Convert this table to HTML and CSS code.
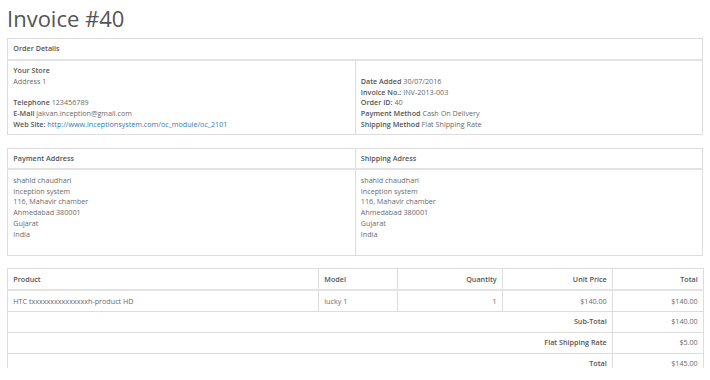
FILE: index.html
```html
<!DOCTYPE html>
<html>
<head>
<meta charset="utf-8">
<link rel="stylesheet" href="styles.css">
</head>
<body>
<div class="container">
  <h1 class="title">Invoice #40</h1>

  <table class="tbl">
    <thead>
      <tr><td colspan="2">Order Details</td></tr>
    </thead>
    <tbody>
      <tr>
        <td class="half">
          <b>Your Store</b><br>
          Address 1<br>
          <br>
          <b>Telephone</b> 123456789<br>
          <b>E-Mail</b> jakvan.inception@gmail.com<br>
          <b>Web Site:</b> <a href="#">http://www.inceptionsystem.com/oc_module/oc_2101</a>
        </td>
        <td class="half">
          <span class="blank">&nbsp;</span><br>
          <b>Date Added</b> 30/07/2016<br>
          <b>Invoice No.:</b> INV-2013-003<br>
          <b>Order ID:</b> 40<br>
          <b>Payment Method</b> Cash On Delivery<br>
          <b>Shipping Method</b> Flat Shipping Rate
        </td>
      </tr>
    </tbody>
  </table>

  <table class="tbl">
    <thead>
      <tr><td class="half">Payment Address</td><td class="half">Shipping Adress</td></tr>
    </thead>
    <tbody>
      <tr>
        <td>shahid chaudhari<br>Inception system<br>116, Mahavir chamber<br>Ahmedabad 380001<br>Gujarat<br>India<br>&nbsp;</td>
        <td>shahid chaudhari<br>Inception system<br>116, Mahavir chamber<br>Ahmedabad 380001<br>Gujarat<br>India<br>&nbsp;</td>
      </tr>
    </tbody>
  </table>

  <table class="tbl products">
    <colgroup>
      <col class="c-product"><col class="c-model"><col class="c-qty"><col class="c-price"><col class="c-total">
    </colgroup>
    <thead>
      <tr>
        <td>Product</td>
        <td>Model</td>
        <td class="r">Quantity</td>
        <td class="r">Unit Price</td>
        <td class="r">Total</td>
      </tr>
    </thead>
    <tbody>
      <tr>
        <td>HTC txxxxxxxxxxxxxxxh-product HD</td>
        <td>lucky 1</td>
        <td class="r">1</td>
        <td class="r">$140.00</td>
        <td class="r">$140.00</td>
      </tr>
    </tbody>
    <tfoot>
      <tr><td class="r lbl" colspan="4">Sub-Total</td><td class="r">$140.00</td></tr>
      <tr><td class="r lbl" colspan="4">Flat Shipping Rate</td><td class="r">$5.00</td></tr>
      <tr><td class="r lbl" colspan="4">Total</td><td class="r">$145.00</td></tr>
    </tfoot>
  </table>
</div>
</body>
</html>
```

FILE: styles.css
```css
html, body {
  margin: 0;
  padding: 0;
  background: #fff;
}

body {
  font-family: "Open Sans", "Liberation Sans", sans-serif;
  font-size: 7.2px;
  line-height: 10.7px;
  color: #6a6a6a;
}

.container {
  padding: 0 7px;
  height: 368px;
  overflow: hidden;
}

.title {
  margin: 6px 0 7px 0;
  font-size: 22px;
  line-height: 24.75px;
  font-weight: 400;
  color: #555;
}

.tbl {
  width: 696px;
  border-collapse: collapse;
  table-layout: fixed;
  margin-bottom: 12.5px;
}

.tbl td {
  border: 1px solid #ddd;
  padding: 4.6px 5.3px;
  vertical-align: top;
  text-align: left;
}

.tbl thead td {
  font-weight: 600;
  color: #555;
  border-bottom: 2px solid #e3e3e3;
}

.half {
  width: 50%;
}

b {
  font-weight: 600;
  color: #555;
}

a {
  color: #337ab7;
  text-decoration: none;
}

.tbl .r {
  text-align: right;
}

.tbl .lbl {
  font-weight: 600;
  color: #555;
}

.c-product { width: 311px; }
.c-model { width: 79px; }
.c-qty { width: 105px; }
.c-price { width: 110px; }
.c-total { width: 91px; }
```
